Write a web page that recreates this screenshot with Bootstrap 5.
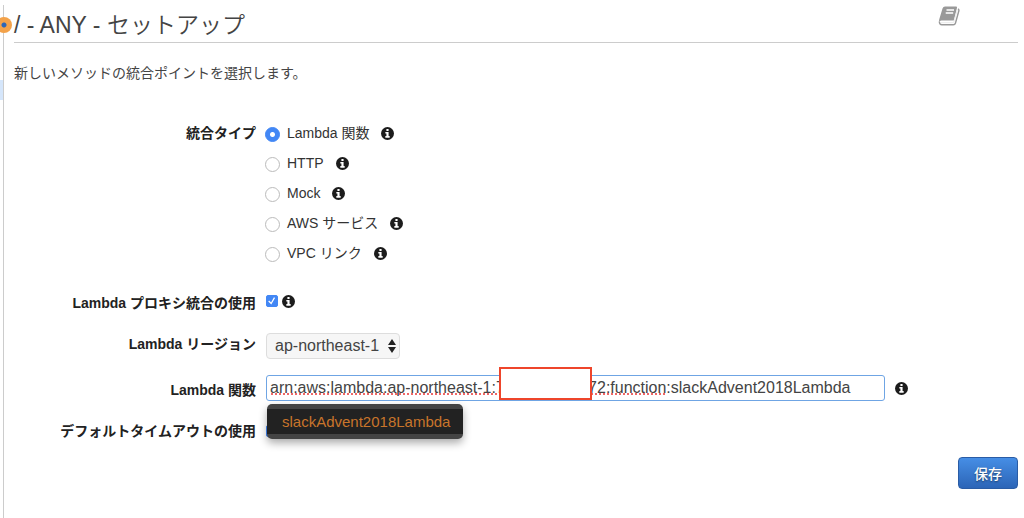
<!DOCTYPE html>
<html lang="ja">
<head>
<meta charset="utf-8">
<meta name="viewport" content="width=device-width, initial-scale=1">
<title>メソッドのセットアップ</title>
<link href="https://cdn.jsdelivr.net/npm/bootstrap@5.3.0/dist/css/bootstrap.min.css" rel="stylesheet">
<style>
body{font:14px/20px "Liberation Sans","Noto Sans CJK JP",sans-serif;color:#333;background:#fff}
.rail{width:4px;margin-top:5px;border-right:1px solid #ccc}
.rail-dot{left:-4px;top:12px;width:16px;height:16px;border-radius:50%;background:radial-gradient(circle,#2a66b8 0 2px,#f3a24a 3px)}
.rail-mark{top:75px;left:0;width:3px;height:20px;background:#d5e6fb}
.page{padding:4px 6px 20px 10px}
.page-head{height:39px;border-bottom:1px solid #ccc}
.page-head h1{font:350 23px/42px "Liberation Sans","Noto Sans CJK JP",sans-serif;color:#444;margin:0}
.page-head .book{margin-right:58px}
.intro{margin:19px 0 41px;font-family:"Noto Sans CJK JP",sans-serif;color:#444}
.form-line{display:flex;align-items:center;gap:10px}
.field-name{width:242px;flex:none;text-align:right;font-weight:700;color:#222}
.choices{margin-left:-1px}
.choice{height:30px}
.choice label{margin:0 12px 0 7px}
.form-check-input.tick{width:15px;height:15px;margin:0;border-color:#bbb}
.form-check-input.tick:checked{background-color:#4287f5;border-color:#4287f5}
.form-check-input[type=radio].tick:checked{background-image:radial-gradient(circle,#fff 0 2px,transparent 3px)}
.form-check-input[type=checkbox].tick{width:12px;height:12px;border-radius:2px}
.form-check-input[type=checkbox].tick:checked{background-image:url("data:image/svg+xml,%3Csvg xmlns='http://www.w3.org/2000/svg' viewBox='0 0 12 12'%3E%3Cpath d='m2 6 3 3 4-7' fill='none' stroke='%23fff' stroke-width='1.500'/%3E%3C/svg%3E")}
.region{width:134px;height:26px;padding:0 16px 0 8px;font-size:16px;line-height:22px;color:#444;border:1px solid #ddd;border-radius:4px;background:#f6f6f6 url("data:image/svg+xml,%3Csvg xmlns='http://www.w3.org/2000/svg' viewBox='0 0 8 14'%3E%3Cpath d='M0 6 4 0l4 6zM0 8h8l-4 6z' fill='%23222'/%3E%3C/svg%3E") no-repeat right 3px center/8px 14px}
.arn{height:26px;padding:0 3px;font-size:16px;color:#444;border:1px solid #6fa5e4;border-radius:3px}
.spell{left:5px;top:18px;width:396px;height:2px;background:repeating-linear-gradient(90deg,#e66 0 2px,transparent 2px 4px);pointer-events:none}
.redact{left:233px;top:-8px;width:93px;height:33px;background:#fff;border:2px solid #ee452b}
.suggest{left:1px;top:29px;width:196px;height:35px;padding:5px 0;background:#444;border-radius:5px;box-shadow:0 4px 8px #0005;z-index:3}
.suggest button{display:block;width:100%;height:25px;padding:0 15px;border:0;font-size:15px;background:#222;color:#c9752b;text-align:left}
.arn-row{margin:0 110px 20px 0}
.save{width:60px;height:32px;padding:0;font:500 14px/30px "Noto Sans CJK JP",sans-serif;color:#fff;border:1px solid #2a5ca5;border-radius:4px;background:linear-gradient(#468ee5,#2c65b7);text-shadow:0 1px 2px #0007}
</style>
</head>
<body>
<svg class="d-none" aria-hidden="true"><symbol id="info" viewBox="0 0 12 12"><circle cx="6" cy="6" r="6" fill="#1c1c1c"/><path d="M5 1.800h2v1.800H5zM4 4.600h3v3.800h1V10H4V8.400h1V6H4z" fill="#fff"/></symbol></svg>
<div class="d-flex min-vh-100">
  <div class="rail position-relative flex-shrink-0"><span class="rail-dot position-absolute"></span><span class="rail-mark position-absolute"></span></div>
  <main class="page flex-grow-1">
    <header class="page-head d-flex justify-content-between align-items-start">
      <h1>/ - ANY - セットアップ</h1>
      <svg class="book" width="22" height="22" viewBox="0 0 22 22" role="img" aria-label="ドキュメント"><path d="M7 2.500h11q1.300 0 1 1.200L16 16.500H3.500Q1.500 16.500 1.300 18 .8 17 1.200 15.500L4.500 4.500Q5.200 2.500 7 2.500z" fill="#999"/><path d="M8.500 6h7.500M7.700 9h7.500" stroke="#fff" stroke-width="1.400"/><path d="M20 5q1.200.6.8 2l-3.300 12q-.5 1.800-2.200 1.800H3.800Q1.500 20.800 1.300 17.500" fill="none" stroke="#999" stroke-width="1.400"/><path d="M3 18.600h11.500q1.200 0 1.500-1L19.200 6" fill="none" stroke="#eee" stroke-width="1.200"/></svg>
    </header>
    <p class="intro">新しいメソッドの統合ポイントを選択します。</p>
    <form>
      <div class="form-line align-items-start mb-3" role="radiogroup" aria-labelledby="type-name">
        <div class="field-name" id="type-name">統合タイプ</div>
        <div class="choices">
          <div class="choice d-flex"><input class="form-check-input tick mt-1" type="radio" name="t" id="t1" checked><label for="t1">Lambda 関数</label><svg class="mt-1" width="13" height="13"><use href="#info"/></svg></div>
          <div class="choice d-flex"><input class="form-check-input tick mt-1" type="radio" name="t" id="t2"><label for="t2">HTTP</label><svg class="mt-1" width="13" height="13"><use href="#info"/></svg></div>
          <div class="choice d-flex"><input class="form-check-input tick mt-1" type="radio" name="t" id="t3"><label for="t3">Mock</label><svg class="mt-1" width="13" height="13"><use href="#info"/></svg></div>
          <div class="choice d-flex"><input class="form-check-input tick mt-1" type="radio" name="t" id="t4"><label for="t4">AWS サービス</label><svg class="mt-1" width="13" height="13"><use href="#info"/></svg></div>
          <div class="choice d-flex"><input class="form-check-input tick mt-1" type="radio" name="t" id="t5"><label for="t5">VPC リンク</label><svg class="mt-1" width="13" height="13"><use href="#info"/></svg></div>
        </div>
      </div>
      <div class="form-line mb-3 pt-1">
        <label class="field-name" for="proxy">Lambda プロキシ統合の使用</label>
        <div class="d-flex align-items-center gap-1 pb-1"><input class="form-check-input tick" type="checkbox" id="proxy" checked><svg width="13" height="13"><use href="#info"/></svg></div>
      </div>
      <div class="form-line mb-3 pt-1">
        <label class="field-name pb-1" for="region">Lambda リージョン</label>
        <select class="form-select region" id="region"><option>ap-northeast-1</option></select>
      </div>
      <div class="arn-row form-line">
        <label class="field-name pt-1" for="arn">Lambda 関数</label>
        <div class="position-relative flex-grow-1">
          <input class="form-control arn" type="text" id="arn" spellcheck="false" value="arn:aws:lambda:ap-northeast-1:7&#8199;&#8199;&#8199;&#8199;&#8199;&#8199;&#8199;&#8199;&#8199;&#8201;72:function:slackAdvent2018Lambda">
          <span class="spell position-absolute"></span><span class="redact position-absolute"></span>
          <div class="suggest position-absolute"><button type="button">slackAdvent2018Lambda</button></div>
        </div>
        <svg class="flex-shrink-0" width="13" height="13"><use href="#info"/></svg>
      </div>
      <div class="form-line mb-3">
        <label class="field-name" for="timeout">デフォルトタイムアウトの使用</label>
        <input class="form-check-input tick" type="checkbox" id="timeout" checked>
      </div>
      <div class="text-end"><button class="btn save" type="submit">保存</button></div>
    </form>
  </main>
</div>
<script src="https://cdn.jsdelivr.net/npm/bootstrap@5.3.0/dist/js/bootstrap.bundle.min.js"></script>
</body>
</html>
